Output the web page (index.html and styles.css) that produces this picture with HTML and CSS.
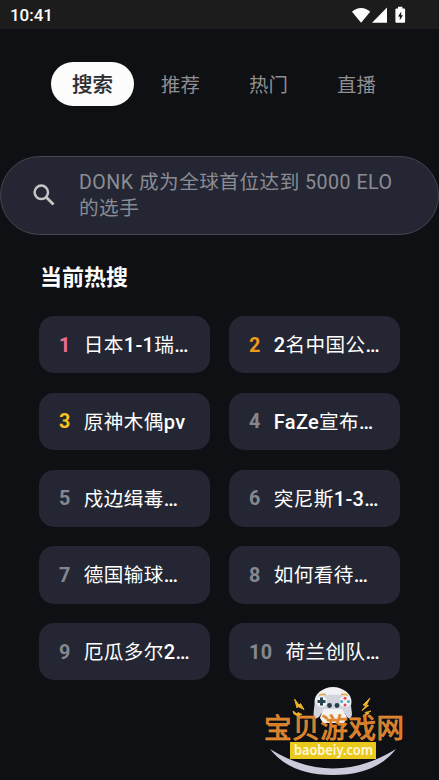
FILE: index.html
```html
<!DOCTYPE html>
<html lang="zh-CN">
<head>
<meta charset="utf-8">
<title>搜索</title>
<link rel="stylesheet" href="styles.css">
</head>
<body>
<header class="status">
  <span class="time">10:41</span>
  <svg class="status-icons" width="56" height="18" viewBox="0 0 56 18" fill="#fff">
    <path d="M0 3.700C5-1.400 13.200-1.400 18.200 3.700L9.100 14.700Z"/>
    <path d="M20 14.700 35-.5v15.200Z"/>
    <path fill-rule="evenodd" d="M46 .5V-1.300h4.400V.5h1.700q1 0 1 1v12.200q0 1-1 1h-7.700q-1 0-1-1V1.500q0-1 1-1ZM49.200 3.500l-3.200 5h1.800v3.800l3.200-5h-1.800Z"/>
  </svg>
</header>
<nav class="tabs">
  <a class="tab active">搜索</a><a class="tab">推荐</a><a class="tab">热门</a><a class="tab">直播</a>
</nav>
<div class="search">
  <svg class="search-icon" width="22" height="22" viewBox="0 0 22 22" fill="none" stroke="#c5c5c6">
    <circle cx="8.300" cy="8.300" r="6.700" stroke-width="2.500"/>
    <path d="m13 13 7.500 7.500" stroke-width="2.900"/>
  </svg>
  <p class="placeholder">DONK 成为全球首位达到 5000 ELO<br>的选手</p>
</div>
<main class="hot">
  <h2 class="heading">当前热搜</h2>
  <div class="grid">
    <div class="card"><b class="rank pink">1</b><span>日本<i>1-1</i>瑞<i>…</i></span></div>
    <div class="card"><b class="rank orange">2</b><span><i>2</i>名中国公<i>…</i></span></div>
    <div class="card"><b class="rank yellow">3</b><span>原神木偶<i>pv</i></span></div>
    <div class="card"><b class="rank">4</b><span><i>FaZe</i>宣布<i>…</i></span></div>
    <div class="card"><b class="rank">5</b><span>戍边缉毒<i>…</i></span></div>
    <div class="card"><b class="rank">6</b><span>突尼斯<i>1-3…</i></span></div>
    <div class="card"><b class="rank">7</b><span>德国输球<i>…</i></span></div>
    <div class="card"><b class="rank">8</b><span>如何看待<i>…</i></span></div>
    <div class="card"><b class="rank">9</b><span>厄瓜多尔<i>2…</i></span></div>
    <div class="card"><b class="rank">10</b><span>荷兰创队<i>…</i></span></div>
  </div>
</main>
<svg class="watermark" width="170" height="100" viewBox="0 0 170 100">
  <path d="M20 69Q83 108 146 69Q126 95 83 95Q40 95 20 69Z" fill="#cbcbdb"/>
  <ellipse cx="83" cy="22" rx="18.500" ry="15" fill="#f1f1f3"/>
  <path d="M68 16Q83 13 98 16Q101 22 102 34Q101 41 97 37L92 29H74L69 37Q64 41 63.500 34Q64 22 68 16Z" fill="#d3d4dd"/>
  <path d="M70 38Q71 31 78 31H89Q95 31 97 38L94 43H73Z" fill="#f4f3ef"/>
  <circle cx="71.500" cy="21.500" r="5.500" fill="#f3f3f6"/>
  <circle cx="95" cy="21.500" r="5.500" fill="#f3f3f6"/>
  <path d="M71.500 17.500v8M67.500 21.500h8" stroke="#25454e" stroke-width="3"/>
  <g fill="#e44455"><circle cx="95" cy="18.300" r="1.500"/><circle cx="95" cy="25" r="1.500"/></g>
  <g fill="#46a9c6"><circle cx="91.600" cy="21.600" r="1.500"/><circle cx="98.400" cy="21.600" r="1.500"/></g>
  <g fill="#263e49"><circle cx="79.500" cy="25.500" r="2.400"/><circle cx="87" cy="25.500" r="2.400"/></g>
  <path d="M69 15.500q3-2 7-1M91 14.500q4-1 7 1" stroke="#e5a838" stroke-width="1.500" fill="none"/>
  <path d="M44.500 19 49 25l1.500-1.500 3.500 6-6-3-1 1.500ZM43 31l4 3 1-1.500 4 2-3 .5 1 2-6-3ZM120 18l-7 7 3 .5-4 5 6.500-5-2-.5ZM121 31l-6 1.500 1 1-3 3 6-3-1-1Z" fill="#efb629" stroke="#efb629" stroke-width=".9"/>
  <text class="brand" x="14" y="58" textLength="140" lengthAdjust="spacing">宝贝游戏网</text>
  <path d="M40 62h86v17H40z" fill="#e9c91e"/>
  <text class="domain" x="44" y="74.500" textLength="79" lengthAdjust="spacingAndGlyphs">baobeiy.com</text>
</svg>
</body>
</html>
```
FILE: styles.css
```css
* { box-sizing: border-box; }
body {
  margin: 0;
  height: 780px;
  overflow: hidden;
  position: relative;
  background: #0f1014;
  color: #fff;
  font-family: Roboto, "Noto Sans CJK SC", sans-serif;
}
.status {
  height: 29px;
  padding: 0 29px 0 10px;
  background: #1c1c1c;
  display: flex;
  align-items: center;
  justify-content: space-between;
}
.time { font-size: 17px; font-weight: 500; letter-spacing: -.05px; line-height: 29px; padding-top: 2px; }
.status-icons { margin: 4px 2px 0 0; overflow: visible; }
.tabs {
  display: grid;
  grid-template-columns: repeat(4, 88px);
  justify-content: center;
  justify-items: center;
  margin-top: 33px;
  padding-left: 10px;
}
.tab {
  height: 44px;
  width: 83px;
  line-height: 48px;
  text-align: center;
  font-size: 19.400px;
  color: #8f8f91;
}
.active { background: #fcfcfc; color: #2b2c30; border-radius: 22px; line-height: 47px; font-size: 20.500px; font-weight: 500; -webkit-text-stroke: .2px #2b2c30; }
.search {
  height: 79.500px;
  margin-top: 49.500px;
  padding: 2px 20px 0 32px;
  display: flex;
  align-items: center;
  gap: 24px;
  border: 1px solid #44464f;
  border-radius: 40px;
  background: #242733;
}
.search-icon { flex: none; margin-top: -2px; }
.placeholder {
  margin: 0;
  color: #8b8c93;
  font-size: 19.600px;
  line-height: 26.500px;
  letter-spacing: .5px;
  white-space: nowrap;
}
.hot { padding: 26px 39px 0; }
.heading {
  margin: 0 0 23px 1px;
  height: 32px;
  line-height: 33px;
  font-size: 22px;
  font-weight: 700;
}
.grid { display: grid; grid-template-columns: 171px 171px; gap: 19.500px 19px; }
.card {
  height: 57.250px;
  padding: 0 0 2px 20px;
  display: flex;
  align-items: center;
  gap: 13.200px;
  border-radius: 15px;
  background: #242733;
  font-size: 19.600px;
  letter-spacing: .4px;
  white-space: nowrap;
}
.card i { font-style: normal; font-weight: 500; font-size: 20px; letter-spacing: .3px; }
.rank { font-size: 19.800px; font-weight: 700; color: #858790; padding-top: 3px; letter-spacing: .3px; }
.pink { color: #ef6e98; }
.orange { color: #f49a1a; }
.yellow { color: #f6c21c; }
.watermark { position: absolute; left: 250px; top: 680px; }
.brand { font: 400 27.500px "Noto Sans CJK SC", sans-serif; fill: #d9771d; stroke: #e4923c; stroke-width: .8px; }
.domain { font: 600 14.500px "Noto Sans", sans-serif; fill: #fff8d8; }
```
